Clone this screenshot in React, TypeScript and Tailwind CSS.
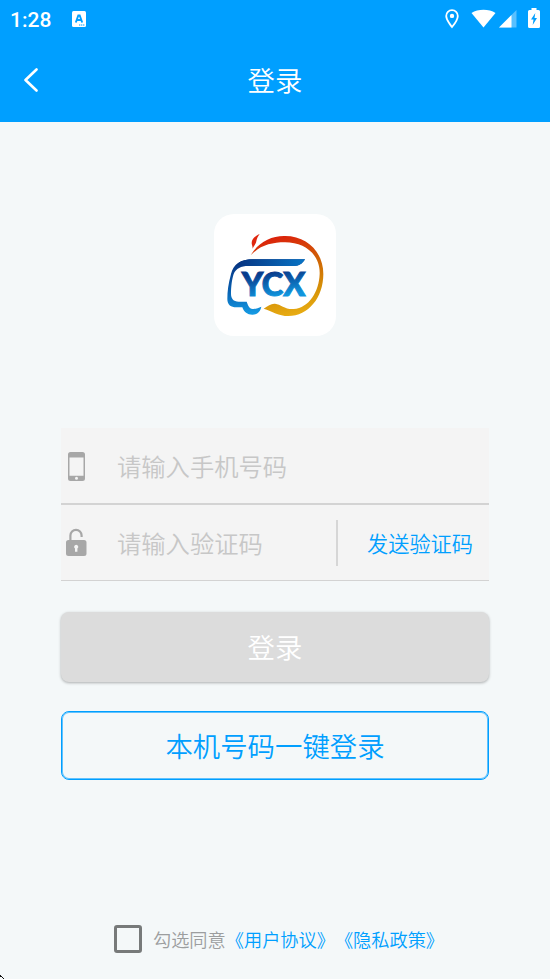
import React from "react";

function StatusBar() {
  return (
    <div className="flex h-[38px] items-center pl-[10px] pr-[9px] text-white">
      <span className="w-[62px] pt-[2px] font-[Roboto,sans-serif] text-[21px] font-medium leading-[38px]">1:28</span>
      <svg className="mt-[-1px]" width="14" height="16" viewBox="0 0 14 16">
        <rect width="14" height="16" rx="1.5" fill="white" />
        <path d="M3.800 11.500 6.300 4.500h1.400L10.200 11.500M5 9h4" fill="none" stroke="#009fff" strokeWidth="1.9" />
        <path d="M7 14h6" stroke="#009fff" strokeWidth="1" strokeDasharray="1.4 .6" />
      </svg>
      <svg className="ml-auto mt-[-1px]" width="14" height="20" viewBox="0 0 14 20">
        <path d="M7 1.2C3.7 1.2 1.2 3.7 1.2 7c0 4.2 5.8 11 5.8 11s5.8-6.8 5.8-11c0-3.300-2.500-5.800-5.800-5.800Z" fill="none" stroke="white" strokeWidth="1.8" />
        <circle cx="7" cy="6.900" r="2.200" fill="white" />
      </svg>
      <svg className="ml-[12px] mt-[-1px]" width="25" height="20" viewBox="0 0 25 20">
        <path d="M.5 4C7-.2 18-.2 24.500 4L12.500 18.500Z" fill="white" />
      </svg>
      <svg className="ml-[3px] mt-[-1px]" width="18" height="20" viewBox="0 0 18 20">
        <path d="M0 18.500 17.500 1v17.500Z" fill="white" fillOpacity=".35" />
        <path d="M0 18.500 12.500 6v12.500Z" fill="white" />
      </svg>
      <svg className="ml-[11px] mr-px mt-[-2px]" width="12" height="20" viewBox="0 0 12 20">
        <path d="M3.500 0h5v2h2q1.500 0 1.500 1.500v15q0 1.500-1.500 1.500h-9Q0 20 0 18.500v-15Q0 2 1.500 2h2Z" fill="white" />
        <path d="M7.300 5 3 11.500h2.500L4.700 17 9 10H6.500Z" fill="#009fff" />
      </svg>
    </div>
  );
}

function Logo() {
  return (
    <div className="h-[122px] w-[122px] rounded-[20px] bg-white">
      <svg width="122" height="122" viewBox="27 27 366 366">
        <defs>
          <linearGradient id="ring" gradientUnits="userSpaceOnUse" x1="220" y1="90" x2="270" y2="330">
            <stop offset="0" stopColor="#dc1e0b" />
            <stop offset=".4" stopColor="#cf6505" />
            <stop offset=".75" stopColor="#d69308" />
            <stop offset="1" stopColor="#e8ac13" />
          </linearGradient>
          <linearGradient id="swoosh" gradientUnits="userSpaceOnUse" x1="130" y1="165" x2="140" y2="328">
            <stop offset="0" stopColor="#08327f" />
            <stop offset=".5" stopColor="#075cad" />
            <stop offset="1" stopColor="#159be4" />
          </linearGradient>
          <linearGradient id="roof" x1="0" x2="1">
            <stop offset="0" stopColor="#07327f" />
            <stop offset="1" stopColor="#0874c5" />
          </linearGradient>
          <linearGradient id="letters" gradientUnits="userSpaceOnUse" x1="200" y1="203" x2="210" y2="275">
            <stop offset="0" stopColor="#083c8d" />
            <stop offset="1" stopColor="#1096de" />
          </linearGradient>
        </defs>
        <path d="M164 87C149 94 140 103 140 114C140 120 143 123 143 131C145 123 153 118 154 109C155 101 159 94 164 87Z" fill="#df260e" />
        <path d="M137 151C160 112 198 92 240 93C308 93 355 143 355 207C355 278 310 333 250 333C221 333 202 319 176 311C190 302 198 295 210 296C228 298 240 314 266 312C312 309 342 260 344 207C346 150 301 112 240 112C200 112 165 121 137 151Z" fill="url(#ring)" />
        <path d="M300 163H143C105 163 86 178 78 207C70 236 67 260 67 282C67 300 78 307 94 307H112C117 322 127 329 142 329C157 329 166 320 169 305C160 308 151 313 143 312C132 310 129 301 125 290H101C85 290 78 280 78 267C78 245 81 222 86 207C93 191 108 183 130 183H268C282 183 291 177 300 163Z" fill="url(#swoosh)" />
        <path d="M300 163H143C118 163 102 170 92 183C103 180 115 183 130 183H268C282 183 291 177 300 163Z" fill="url(#roof)" />
        <text x="110" y="272" textLength="191" lengthAdjust="spacingAndGlyphs" className="font-[Lato,sans-serif] text-[94px] font-black" fill="url(#letters)" stroke="url(#letters)" strokeWidth="3">YCX</text>
      </svg>
    </div>
  );
}

function PhoneIcon() {
  return (
    <svg className="mt-[2px]" width="18" height="30" viewBox="0 0 18 30">
      <path fillRule="evenodd" d="M2.500 0h12q2.500 0 2.500 2.500v24q0 2.500-2.500 2.500h-12Q0 29 0 26.500v-24Q0 0 2.500 0ZM1.500 5.500v18.200h14V5.500ZM8.500 24.800a1.500 1.500 0 1 0 0 3 1.500 1.500 0 0 0 0-3Z" fill="#a7a7a7" />
    </svg>
  );
}

function LockIcon() {
  return (
    <svg width="21" height="29" viewBox="0 0 21 29">
      <path d="M4.400 13V7.500a5.600 5.600 0 0 1 11.200 0V9" fill="none" stroke="#a7a7a7" strokeWidth="2.2" />
      <path fillRule="evenodd" d="M2.500 12h15.500q2.500 0 2.500 2.500v11q0 2.500-2.500 2.500H2.500Q0 28 0 25.500v-11Q0 12 2.500 12ZM10.200 16.700a2.100 2.100 0 0 0-1.200 3.800v3.300h2.400v-3.300a2.100 2.100 0 0 0-1.200-3.800Z" fill="#a7a7a7" />
    </svg>
  );
}

export default function App() {
  return (
    <div className="relative flex h-[979px] w-[550px] flex-col overflow-hidden bg-[#f4f8f9] font-['Noto_Sans_CJK_SC',sans-serif] font-[350]">
      <header className="h-[122px] shrink-0 bg-[#009fff]">
        <StatusBar />
        <div className="grid h-[84px] grid-cols-[60px_1fr_60px] items-center">
          <button className="ml-[23px] w-[16px]" aria-label="返回">
            <svg width="16" height="24" viewBox="0 0 16 24">
              <path d="M13.500 1.500 2.500 12l11 10.500" fill="none" stroke="white" strokeWidth="2.600" strokeLinecap="round" strokeLinejoin="round" />
            </svg>
          </button>
          <h1 className="pb-[2px] text-center text-[27.400px] font-[350] leading-[40px] text-white">登录</h1>
        </div>
      </header>
      <main className="flex grow flex-col items-center pt-[92px]">
        <Logo />
        <form className="mt-[92px] w-[428px]">
          <div className="flex h-[77px] items-center border-b-2 border-[#d3d3d3] bg-[#f4f4f4] pl-[7px]">
            <div className="w-[49px]"><PhoneIcon /></div>
            <span className="text-[24.300px] leading-[36px] text-[#c7c7c7]">请输入手机号码</span>
          </div>
          <div className="flex h-[76px] items-center border-b border-[#d3d3d3] bg-[#f4f4f4] pl-[5px]">
            <div className="w-[51px]"><LockIcon /></div>
            <span className="w-[219px] text-[24.300px] leading-[36px] text-[#c7c7c7]">请输入验证码</span>
            <div className="h-[46px] w-[2px] bg-[#d6d6d6]" />
            <button type="button" className="ml-[29px] whitespace-nowrap text-[21.200px] leading-[36px] text-[#009fff]">发送验证码</button>
          </div>
          <button type="button" className="mt-[31px] block h-[70px] w-[428px] rounded-[8px] bg-[#dcdcdc] pb-[2px] text-[27.400px] leading-[68px] text-white shadow-[0_1px_3px_rgba(0,0,0,0.3)]">登录</button>
          <button type="button" className="mt-[29px] block h-[69px] w-[428px] rounded-[8px] border border-[#009fff] text-[27.400px] leading-[67px] text-[#009fff] shadow-[inset_0_0_0_1px_rgba(0,159,255,0.6)]">本机号码一键登录</button>
        </form>
        <label className="mt-[145px] flex h-[28px] items-center whitespace-nowrap pl-[8px] text-[18.200px] [text-spacing-trim:space-all]">
          <span className="mr-[11px] h-[28px] w-[28px] rounded-[3px] border-[3px] border-[#777a7a]" />
          <span className="pt-[2px] text-[#9c9e9f]">勾选同意</span>
          <span className="pt-[2px] text-[#009fff]">《用户协议》《隐私政策》</span>
        </label>
      </main>
      <svg className="absolute bottom-0 left-0" width="4" height="4" viewBox="0 0 4 4" shapeRendering="crispEdges">
        <path d="M0 0h1v2H0ZM1 1h1v1H1ZM2 2h1v1H2ZM3 3h1v1H3Z" fill="#111111" />
      </svg>
    </div>
  );
}
